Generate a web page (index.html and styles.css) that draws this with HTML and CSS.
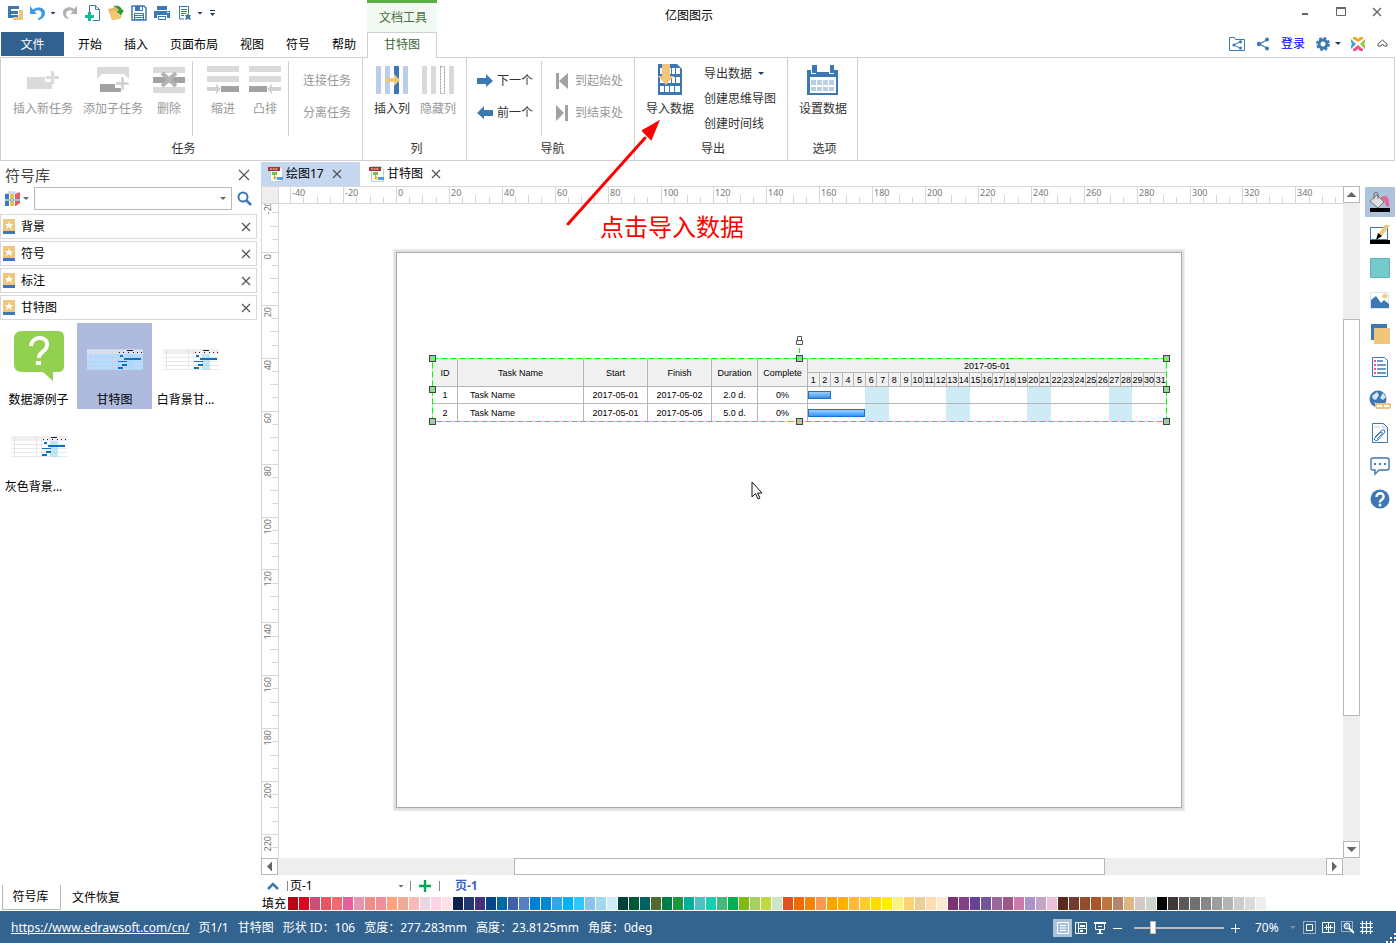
FILE: index.html
```html
<!DOCTYPE html>
<html lang="zh-CN">
<head>
<meta charset="utf-8">
<title>亿图图示</title>
<link rel="stylesheet" href="styles.css">
</head>
<body>
<div class="app">
  <header class="titlebar">
    <div class="title-left">
      <div class="quick">
        <button aria-label="亿图"><svg width="16" height="16"><path d="M1 1h11v3H4v2h7v3H4v1h7v3H1z" fill="#3c78b4"/><path d="M12 5h4v10H6v-3h6V9h1V8h-1z" fill="#efc67b"/></svg></button>
        <button aria-label="撤销"><svg width="16" height="16"><path d="M0 1v8h7L4.500 6.500C8 4 12 6 11.500 9c0 2-1.500 3.500-3.500 4.500v1.500c4-.5 7-3 7-7 0-5-6.500-7.500-12-3.500z" fill="#3e9be0"/></svg></button>
        <i class="caret"></i>
        <button aria-label="重做"><svg width="16" height="16"><path d="M15 1v8H8l3-2.500C8 4 4 6 4 9c0 2 1 3 2.500 4v1C3 13.500 1 11 1 8c0-5 6.500-7.500 11-4z" fill="#b0b0b0"/></svg></button>
        <button aria-label="新建"><svg width="16" height="16"><path d="M4.500 8V.500h6l4 4v11h-7M10.500.500v4h4" fill="none" stroke="#3c78b4"/><path d="M3 7h3v3h3v3H6v3H3v-3H0v-3h3z" fill="#12b89c"/></svg></button>
        <button aria-label="打开"><svg width="16" height="16"><path d="M0 4l5-1 2-2 3 2 5 2-2 8-9 2z" fill="#e6b85f"/><path d="M2 6l12-1-2 9-8 1z" fill="#f2c877"/><path d="M5 1c5-1 8 0 9 4h2l-3 5-5-4h3c-1-3-3-4-6-5z" fill="#249a3d"/></svg></button>
        <button aria-label="保存"><svg width="16" height="16"><path d="M1 1h12l2 2v12H1z" fill="none" stroke="#3c78b4" stroke-width="1.500"/><path d="M4 1h8v5H4zM3 8h10v7H3z" fill="#3c78b4"/><path d="M9 2h2v3H9zM4 9h8v1H4zM4 11h8v1H4zM4 13h8v1H4z" fill="#fff"/></svg></button>
        <button aria-label="打印"><svg width="16" height="16"><path d="M3 1h10v4H3zM0 6h16v7h-3v-3H3v3H0zM4 11h8v4H4z" fill="#3c78b4"/><path d="M13 7h2v1h-2zM5 12h6v2H5z" fill="#fff"/></svg></button>
        <button aria-label="预览"><svg width="16" height="16"><path d="M2.500 1.500h9v7M2.500 1v13H7" fill="none" stroke="#3c78b4"/><path d="M4 4h6v1H4zM4 6h6v1H4zM4 8h5v1H4zM4 10h3v1H4zM11 8l1 2h2l-1 2 1 3-3-1-3 1 1-3-1-2h2z" fill="#3c78b4"/></svg></button>
        <i class="caret"></i>
        <button class="more" aria-label="自定义"><svg width="7" height="10"><path d="M1 2h5v1H1zM1 5h5L3.500 8z" fill="#223a5c"/></svg></button>
      </div>
      <div class="context-title">文档工具</div>
    </div>
    <h1>亿图图示</h1>
    <div class="window-controls">
      <button aria-label="最小化"><svg width="10" height="10"><path d="M2 6h6v2H2z" fill="#666"/></svg></button>
      <button aria-label="最大化"><svg width="10" height="10"><path d="M.500.500h9v8h-9z" fill="none" stroke="#666"/><path d="M0 0h10v2H0z" fill="#666"/></svg></button>
      <button aria-label="关闭"><svg width="10" height="10"><path d="M1 1l8 8M9 1L1 9" stroke="#666" stroke-width="1.400"/></svg></button>
    </div>
  </header>

  <nav class="tabs">
    <button class="file">文件</button>
    <button>开始</button><button>插入</button><button>页面布局</button><button>视图</button><button>符号</button><button>帮助</button>
    <button class="current">甘特图</button>
    <div class="account">
      <button aria-label="共享文件夹"><svg width="16" height="16"><path d="M.500 14.500v-13h5l1 2h9v11z" fill="none" stroke="#3c78b4"/><path d="M12 5.500L4.500 9l7.500 3.500" fill="none" stroke="#3c78b4"/><circle cx="5" cy="9" r="1.600" fill="#3c78b4"/><circle cx="11.500" cy="5.800" r="1.600" fill="#3c78b4"/><circle cx="11.500" cy="12" r="1.600" fill="#3c78b4"/></svg></button>
      <button aria-label="分享"><svg width="14" height="14"><path d="M11 3L3 7l8 4" fill="none" stroke="#3c78b4" stroke-width="1.200"/><circle cx="3" cy="7" r="2.200" fill="#3c78b4"/><circle cx="11" cy="2.500" r="2" fill="#3c78b4"/><circle cx="11" cy="11.500" r="2" fill="#3c78b4"/></svg></button>
      <a href="#login">登录</a>
      <button class="gear" aria-label="设置"><svg width="14" height="14"><circle cx="7" cy="7" r="4" fill="none" stroke="#3c78b4" stroke-width="3"/><circle cx="7" cy="7" r="6" fill="none" stroke="#3c78b4" stroke-width="2" stroke-dasharray="2.700 2"/></svg><i class="caret"></i></button>
      <button aria-label="社区"><svg width="16" height="16"><path d="M3 1h3l2 2 2-2h3v2L8 6 3 3z" fill="#f7a51c"/><path d="M1 3l5 5-5 5v-3l1-2-1-2z" fill="#39a5dc"/><path d="M15 3l-5 5 5 5v-3l-1-2 1-2z" fill="#8cc63f"/><path d="M3 15h3l2-2 2 2h3v-2l-5-4-5 4z" fill="#f2587e"/></svg></button>
      <button class="fold" aria-label="折叠功能区"><svg width="11" height="9"><path d="M1 5l4.500-4L10 5v2H7L5.500 5 4 7H1z" fill="none" stroke="#555"/></svg></button>
    </div>
  </nav>

  <section class="ribbon">
    <div class="group">
      <div class="tools tools-task">
        <button class="big wide off"><svg width="32" height="32"><path d="M0 13h18v5h7v7H0z" fill="#dadada"/><path d="M24 7h3v5h5v3h-5v5h-3v-5h-5v-3h5z" fill="#dadada"/></svg>插入新任务</button>
        <button class="big wide off"><svg width="32" height="32"><path d="M0 3h32v12l-5-5H5l-5 5z" fill="#dadada"/><path d="M3 20h15v4h6v4H3z" fill="#a2a2a2"/><path d="M24 13h3v5h5v3h-5v5h-3v-5h-5v-3h5z" fill="#cfcfcf" stroke="#fff" stroke-width=".5"/></svg>添加子任务</button>
        <button class="big off"><svg width="32" height="32"><path d="M0 3h32v6H0zM0 23h32v6H0z" fill="#dadada"/><path d="M0 13h32v6H0z" fill="#a2a2a2"/><path d="M9 9l14 13M23 9L9 22" stroke="#b4b4b4" stroke-width="4"/></svg>删除</button>
        <i class="rule"></i>
        <button class="big off"><svg width="32" height="32"><path d="M0 2h32v6H0zM0 12h32v6H0z" fill="#dadada"/><path d="M0 23h9v-3l5 5-5 5v-3H0z" fill="#d2d2d2"/><path d="M14 22h18v6H14z" fill="#a2a2a2"/></svg>缩进</button>
        <button class="big off"><svg width="32" height="32"><path d="M0 2h32v6H0zM0 12h32v6H0z" fill="#dadada"/><path d="M32 23h-9v-3l-5 5 5 5v-3h9z" fill="#d2d2d2"/><path d="M0 22h18v6H0z" fill="#a2a2a2"/></svg>凸排</button>
        <i class="rule"></i>
        <div class="pair"><button class="off">连接任务</button><button class="off">分离任务</button></div>
      </div>
      <div class="label">任务</div>
    </div>
    <div class="group">
      <div class="tools tools-column">
        <button class="big mid"><svg width="32" height="32"><path d="M0 2h5v28H0zM9 2h5v28H9zM27 2h5v28h-5z" fill="#bacfe7"/><path d="M18 2h5v28h-5z" fill="#3c78b4"/><path d="M9 14h9v-4l6 6-6 6v-4H9z" fill="#efc67b"/></svg>插入列</button>
        <button class="big mid off"><svg width="32" height="32"><path d="M0 2h5v28H0zM9 2h5v28H9zM27 2h5v28h-5z" fill="#dadada"/><path d="M18.500 2.500h4v27h-4z" fill="none" stroke="#999" stroke-dasharray="2 1"/></svg>隐藏列</button>
      </div>
      <div class="label">列</div>
    </div>
    <div class="group">
      <div class="tools tools-nav">
        <div class="pair"><button><svg width="16" height="16"><path d="M0 5h9V1l7 7-7 6v-3H0z" fill="#3c78b4"/></svg>下一个</button><button><svg width="16" height="16"><path d="M16 5H7V1L0 8l7 6v-3h9z" fill="#3c78b4"/></svg>前一个</button></div>
        <i class="rule"></i>
        <div class="pair"><button class="off"><svg width="16" height="16"><path d="M1 0h3v16H1zM13 0v16L4 8z" fill="#a2a2a2"/></svg>到起始处</button><button class="off"><svg width="16" height="16"><path d="M10 0h3v16h-3zM1 0v16l8-8z" fill="#a2a2a2"/></svg>到结束处</button></div>
      </div>
      <div class="label">导航</div>
    </div>
    <div class="group">
      <div class="tools tools-export">
        <button class="big import"><svg width="32" height="32"><path d="M4 0h19l5 5v26H4z" fill="#3c78b4"/><path d="M6 4h5v6H6zM12 4h5v6h-5zM18 4h3v6h-3zM22 4h4v6h-4zM6 13h5v6H6zM12 13h5v6h-5zM18 13h3v6h-3zM22 13h4v6h-4zM6 22h4v6H6zM11 22h4v6h-4zM16 22h4v6h-4zM21 22h5v6h-5z" fill="#fff"/><path d="M8 0h8v12h4l-8 9-8-9h4z" fill="#efc67b"/></svg>导入数据</button>
        <div class="list"><button>导出数据<i class="caret"></i></button><button>创建思维导图</button><button>创建时间线</button></div>
      </div>
      <div class="label">导出</div>
    </div>
    <div class="group">
      <div class="tools tools-option">
        <button class="big import"><svg width="32" height="32"><path d="M5 1h5v7h12V1h5v5h4v25H0V6h5z" fill="#3c78b4"/><path d="M3 13h26v16H3z" fill="#fff"/><path d="M4 1h1v8h4v1H4zM22 1h1v8h4v1h-5z" fill="#fff"/><path d="M4 16h5v5H4zM10 16h5v5h-5zM16 16h5v5h-5zM22 16h5v5h-5zM4 23h5v4H4zM10 23h5v4h-5zM16 23h5v4h-5zM22 23h5v4h-5z" fill="#bacfe7"/></svg>设置数据</button>
      </div>
      <div class="label">选项</div>
    </div>
  </section>

  <main class="workspace">
    <aside class="library">
      <div class="library-head"><h2>符号库</h2><button aria-label="关闭"><svg width="12" height="12"><path d="M1 1l10 10M11 1L1 11" stroke="#555" stroke-width="1.200"/></svg></button></div>
      <div class="search">
        <button class="books" aria-label="符号库列表"><svg width="15" height="15"><path d="M0 3h4v12H0z" fill="#3c78b4"/><path d="M5 3h4v12H5z" fill="#efb75c"/><path d="M10 3l5-2v11l-4 3h-1z" fill="#e85a68"/><path d="M0 3l4-3 11 1-5 2z" fill="#d5dade"/><path d="M0 8h15v2H0z" fill="#96c9dd"/></svg><i class="caret"></i></button>
        <div class="combo"><input type="text" aria-label="搜索符号"><button aria-label="展开"><i class="caret"></i></button></div>
        <button aria-label="搜索"><svg width="15" height="15"><circle cx="6" cy="6" r="4.500" fill="none" stroke="#3c78b4" stroke-width="2"/><path d="M9 9l5 5" stroke="#3c78b4" stroke-width="2.500"/></svg></button>
      </div>
      <ul class="categories" id="categories"></ul>
      <div class="shapes">
        <button><svg width="60" height="56"><path d="M13 5h36q6 0 6 6v29q0 6-6 6h-5v9l-10-9H13q-8 0-8-8V13q0-8 8-8z" fill="#92d050"/><path d="M22 20c1-11 17-10 16-1 0 7-9 7-8 13" fill="none" stroke="#fff" stroke-width="4"/><path d="M27 35h5v4h-5z" fill="#fff"/></svg>数据源例子</button>
        <button class="chosen"><svg class="thumb" width="60" height="56"><use href="#mini-gantt"/></svg>甘特图</button>
        <button><svg class="thumb" width="60" height="56"><use href="#mini-gantt"/></svg><span class="elided">白背景甘...</span></button>
        <button><svg class="thumb" width="60" height="56"><use href="#mini-gantt"/></svg><span class="elided">灰色背景...</span></button>
      </div>
      <div class="library-tabs"><button class="active">符号库</button><button>文件恢复</button></div>
    </aside>

    <section class="editor">
      <div class="docs">
        <button class="doc active"><svg width="16" height="16"><use href="#doc-icon"/></svg>绘图17<svg class="x" width="10" height="10"><path d="M1 1l8 8M9 1L1 9" stroke="#555" stroke-width="1.300"/></svg></button>
        <button class="doc"><svg width="16" height="16"><use href="#doc-icon"/></svg>甘特图<svg class="x" width="10" height="10"><path d="M1 1l8 8M9 1L1 9" stroke="#555" stroke-width="1.300"/></svg></button>
      </div>
      <div class="viewport">
        <div class="corner"></div>
        <svg class="ruler-x" id="ruler-x"></svg>
        <div class="scroll-y"><button aria-label="向上"><i class="tri up"></i></button><div class="track"><i></i></div><button aria-label="向下"><i class="tri down"></i></button></div>
        <svg class="ruler-y" id="ruler-y"></svg>
        <div class="canvas">
          <div class="sheet">
            <div class="gantt">
              <table>
                <colgroup id="columns"><col class="c-id"><col class="c-task"><col class="c-date"><col class="c-date"><col class="c-duration"><col class="c-complete"></colgroup>
                <thead>
                  <tr><th rowspan="2">ID</th><th rowspan="2">Task Name</th><th rowspan="2">Start</th><th rowspan="2">Finish</th><th rowspan="2">Duration</th><th rowspan="2">Complete</th><th colspan="31">2017-05-01</th></tr>
                  <tr id="days"></tr>
                </thead>
                <tbody id="tasks"></tbody>
              </table>
              <svg class="selection" width="744" height="90">
                <path d="M5.500 22.500h734v63h-734zM372.500 13v4" fill="none" stroke="#e0e0e0"/>
                <path d="M5.500 22.500h734v63h-734z" fill="none" stroke="#0f0" stroke-dasharray="6 3"/>
                <path d="M372.500 12v5" stroke="#0f0"/>
                <g id="handles" fill="#8fdc8f" stroke="#444"></g>
                <path d="M370.500 4V.500h4V4" fill="none" stroke="#555"/><path d="M369.500 4.500h6v4h-6z" fill="#eee" stroke="#555"/>
              </svg>
            </div>
          </div>
          <p class="note">点击导入数据</p>
          <svg class="pointer" width="12" height="20"><path d="M1 1v15l3.500-3.500L7 18l2-1-2.500-5H11z" fill="#fff" stroke="#111"/></svg>
        </div>
        <div class="scroll-x"><button aria-label="向左"><i class="tri left"></i></button><div class="track"><i></i></div><button aria-label="向右"><i class="tri right"></i></button></div>
      </div>
      <div class="pages">
        <button class="expand" aria-label="展开页面"><svg width="12" height="10"><path d="M1 8l5-5 5 5" fill="none" stroke="#3c78b4" stroke-width="2.500"/></svg></button>
        <i class="bar"></i>
        <div class="page-select"><select aria-label="当前页"><option>页-1</option></select><i class="caret"></i></div>
        <i class="bar"></i>
        <button class="add" aria-label="添加页面"><svg width="12" height="12"><path d="M6 0v12M0 6h12" stroke="#00a651" stroke-width="2.400"/></svg></button>
        <i class="bar"></i>
        <button class="page-tab">页-1</button>
      </div>
      <div class="fill"><span>填充</span><div class="palette" id="palette"></div></div>
    </section>

    <aside class="rail">
      <button class="active" aria-label="填充"><svg width="22" height="22"><path d="M12 6c6-3 9 0 8 10l-3-1c-1-4-2-6-5-6z" fill="#e0699a"/><path d="M1 10l7-6 7 7-6 6z" fill="#dedede" stroke="#777"/><path d="M5 8V3q2-4 4 0v5" fill="none" stroke="#666"/><path d="M1 17h20v4H1z"/></svg></button>
      <button aria-label="线条"><svg width="22" height="22"><path d="M1.500 3.500h17v12h-17z" fill="none" stroke="#3c78b4"/><path d="M16 1h5l-8 11-4 1 1-4z" fill="#efc67b"/><path d="M9 9l4 3-6 4zM1 16h20v4H1z"/></svg></button>
      <button aria-label="主题颜色"><svg width="22" height="22"><path d="M1.500 1.500h19v19h-19z" fill="#75cbca" stroke="#5fb5b3"/></svg></button>
      <button aria-label="图片"><svg width="22" height="22"><path d="M1.500 2.500h18v16h-18z" fill="#fff" stroke="#d4e5f4"/><path d="M2 18v-8l5-4 5 7 3-3 5 4v4z" fill="#3c78b4"/><circle cx="16" cy="6" r="2.500" fill="#f3cb7e"/></svg></button>
      <button aria-label="图层"><svg width="22" height="22"><path d="M2 1h16v16H2z" fill="#3c78b4"/><path d="M5 5h16v16H5z" fill="#efc67b"/></svg></button>
      <button aria-label="属性"><svg width="22" height="22"><path d="M3.500 1.500h12l3 3v16h-15z" fill="#fff" stroke="#3c78b4"/><path d="M8 5h6M8 9h9M8 13h9M8 17h9" stroke="#3c78b4" stroke-width="1.500"/><path d="M5 5h2M5 9h2M5 13h2M5 17h2" stroke="#e75a68" stroke-width="2"/></svg></button>
      <button aria-label="超链接"><svg width="22" height="22"><circle cx="9" cy="10" r="8.500" fill="#3c78b4"/><path d="M3 7l5-4 2 3-3 5-3-1zM11 9l3-5 3 4-3 3zM5 13l4 2-1 3z" fill="#d7e7f2"/><g fill="#fff" stroke="#efc67b" stroke-width="2"><rect x="7" y="15" width="7" height="4" rx="1"/><rect x="14" y="15" width="7" height="4" rx="1"/></g></svg></button>
      <button aria-label="附件"><svg width="22" height="22"><path d="M3.500 1.500h11l4 4v15h-15z" fill="#fff" stroke="#3c78b4"/><path d="M14 2v4h4M5 5h6" fill="none" stroke="#b8c6d4"/><path d="M6 15l7-7q3-1 3 2l-7 8q-3 2-4-1l7-7q2 0 1 2l-5 5" fill="none" stroke="#3c78b4"/></svg></button>
      <button aria-label="批注"><svg width="22" height="22"><path d="M4 3h14q2 0 2 2v8q0 2-2 2h-8l-4 4v-4H4q-2 0-2-2V5q0-2 2-2z" fill="#fff" stroke="#3c78b4" stroke-width="1.400"/><path d="M5 8h2v2H5zM10 8h2v2h-2zM15 8h2v2h-2z" fill="#3c78b4"/></svg></button>
      <button aria-label="帮助"><svg width="22" height="22"><circle cx="11" cy="11" r="9.500" fill="#3c78b4"/><path d="M7.500 9c0-5 7.500-5 7 0 0 3-4 2.500-3.500 5.500" fill="none" stroke="#fff" stroke-width="2.500"/><circle cx="11" cy="17" r="1.500" fill="#fff"/></svg></button>
    </aside>
  </main>

  <footer class="status">
    <a href="https://www.edrawsoft.com/cn/">https://www.edrawsoft.com/cn/</a>
    <span>页1/1</span><span>甘特图</span><span>形状 ID：106</span><span>宽度：277.283mm</span><span>高度：23.8125mm</span><span>角度：0deg</span>
    <div class="view-tools">
      <button class="active" aria-label="页面视图"><svg width="12" height="12"><path d="M.500.500h11v11H.500zM3 3.500h6M3 6h6M3 8.500h6" fill="none" stroke="#fff"/></svg></button>
      <button aria-label="大纲视图"><svg width="12" height="12"><path d="M.500.500h11v11H.500zM3.500 0v12M3 6.500h8" fill="none" stroke="#fff"/><path d="M5 3h5v2H5zM5 8h3v2H5z" fill="#fff"/></svg></button>
      <button aria-label="演示"><svg width="12" height="12"><path d="M0 0h12v2H0zM5 8h2v3h2v1H3v-1h2z" fill="#fff"/><path d="M1.500 1v6.500h9V1M4 4.500h4" fill="none" stroke="#fff"/></svg></button>
      <button class="minus" aria-label="缩小"><svg width="9" height="12"><path d="M0 6.500h9" stroke="#fff"/></svg></button>
      <input type="range" min="10" max="400" value="85" aria-label="缩放">
      <button aria-label="放大"><svg width="9" height="12"><path d="M0 6.500h9M4.500 2v9" stroke="#fff"/></svg></button>
      <span class="zoom-value">70%</span><i class="caret"></i>
      <button class="fit" aria-label="适合页面"><svg width="13" height="13"><path d="M.500.500h12v12H.500z" fill="none" stroke="#fff" stroke-dasharray="1 1"/><path d="M3.500 3.500h6v6h-6z" fill="none" stroke="#fff"/></svg></button>
      <button class="fit" aria-label="适合宽度"><svg width="13" height="13"><path d="M.500 1.500h12v10H.500zM2 6.500h9M4.500 4v5M8.500 4v5M6.500 2v9" fill="none" stroke="#fff"/></svg></button>
      <button class="fit" aria-label="缩放选区"><svg width="13" height="13"><path d="M.500.500h11v10H.500z" fill="none" stroke="#fff" stroke-dasharray="1 1"/><circle cx="6" cy="5" r="3" fill="#7c9ebd" stroke="#fff"/><path d="M8 7l5 5" stroke="#fff" stroke-width="2"/></svg></button>
      <button class="fit" aria-label="网格"><svg width="13" height="13"><path d="M2.500 0v13M6.500 0v13M10.500 0v13M0 2.500h13M0 6.500h13M0 10.500h13" stroke="#fff" stroke-width="1.200"/></svg></button>
    </div>
    <svg class="grip" width="10" height="10"><path d="M8 0h2v2H8zM4 4h2v2H4zM8 4h2v2H8zM0 8h2v2H0zM4 8h2v2H4zM8 8h2v2H8z" fill="#fff"/></svg>
  </footer>

  <svg class="arrow" width="96" height="108"><path d="M3 104L80 18" stroke="#f00" stroke-width="3" stroke-linecap="round"/><path d="M93 2L77 10l9 9z" fill="#f00"/><path d="M93 2L78 11l8 8z" stroke="#f00" stroke-width="2" fill="#f00"/></svg>
</div>

<svg class="defs" width="0" height="0" aria-hidden="true">
  <symbol id="mini-gantt" viewBox="0 0 60 56">
    <path d="M2 24h56v20H2z" class="paper"/><path d="M2 23h56v5H2z" fill="#e6e6e6" opacity=".6"/>
    <path d="M2 31.500h56M2 35.500h56M2 39.500h56M2 43.500h56M5.500 24v20M27.500 24v20M32.500 24v20" stroke="#c8c8d0" opacity=".4"/>
    <path d="M41 28h8v16h-8z" fill="#a9dcf2" opacity=".7"/>
    <path d="M42 24h6v1h-6zM34 26h1v1h-1zM38 26h1v1h-1zM43 26h1v1h-1zM48 26h1v1h-1zM52 26h1v1h-1zM56 26h1v1h-1z" fill="#313"/>
    <path d="M35 29h3v2h-3zM39 32h17v2H39zM33 35h9v1h-9zM37 38h5v2h-5zM33 41h5v2h-5z" fill="#0b73c0"/>
  </symbol>
  <symbol id="doc-icon" viewBox="0 0 16 16">
    <path d="M2.500.500h9l3 3v12h-12z" fill="#fff" stroke="#bcd0d2"/><path d="M0 1h12v4H0z" fill="#a83236"/><path d="M2 3h8" stroke="#f5d9da" stroke-dasharray="2 .6"/>
    <path d="M4 6h5v3H7v2H6V9H4z" fill="#7cbd4c"/><path d="M5 12l2-2 2 2-2 2z" fill="#f6ab24"/><path d="M9 11h6v3H9z" fill="#4b9fea"/>
  </symbol>
</svg>
<script src="app.js"></script>
</body>
</html>
```

FILE: styles.css
```css
* { box-sizing: border-box; }
body { margin: 0; background: #fff; color: #000; font: 12px/16px "Noto Sans", "Noto Sans CJK SC", sans-serif; }
button, input, select { font: inherit; color: inherit; margin: 0; padding: 0; border: 0; background: none; }
button { display: flex; align-items: center; justify-content: center; white-space: nowrap; }
svg { display: block; flex: none; }
h1, h2, p, ul { margin: 0; padding: 0; font-weight: 400; }
.defs { position: absolute; }
.app { position: relative; display: flex; flex-direction: column; min-height: 100vh; }
.caret { display: block; flex: none; width: 6px; height: 3px; background: #666; clip-path: polygon(0 0, 100% 0, 50% 100%); }

.titlebar { display: grid; grid-template-columns: 1fr auto 1fr; height: 32px; padding-right: 18px; }
.titlebar h1 { align-self: center; font-size: 12px; line-height: 16px; }
.title-left { display: flex; }
.quick { display: flex; align-items: center; width: 367px; padding: 0 0 6px 7px; gap: 7px; }
.quick .caret { margin: 0 -1px 0 -3px; background: #223a5c; }
.context-title { width: 70px; padding: 7px 0 0 2px; border-top: 3px solid #5fad46; background: #f2f8f2; color: #4a7040; text-align: center; }
.window-controls { display: flex; justify-content: flex-end; align-items: flex-start; gap: 26px; margin-right: -4px; padding-top: 7px; }

.tabs { display: flex; height: 25px; padding-left: 1px; }
.tabs > button { padding: 0 11px; }
.tabs .file { width: 63px; height: 24px; margin-right: 3px; padding-top: 1px; background: #31618f; color: #fff; }
.tabs .current { position: relative; z-index: 1; width: 70px; height: 26px; padding-bottom: 2px; border: 1px solid #d0d0d0; border-bottom: 0; background: #fff; color: #3d6734; }
.account { display: flex; align-items: center; gap: 11px; margin-left: auto; padding: 0 8px 2px 0; }
.account a { color: #00f; text-decoration: none; }
.account .gear { gap: 5px; margin-right: -2px; }
.account .caret { background: #223a5c; }

.ribbon { display: flex; height: 104px; margin: 0 1px 0 0; border: 1px solid #d0d0d0; color: #333; }
.group { display: flex; flex-direction: column; border-right: 1px solid #d0d0d0; }
.tools { display: flex; height: 80px; padding-top: 3px; }
.label { padding: 3px 0 0 4px; text-align: center; }
.big { flex-direction: column; justify-content: flex-start; width: 42px; padding-top: 3px; gap: 5px; }
.wide { width: 70px; }
.mid { width: 46px; }
.import { width: 60px; }
.off { color: #999; }
.rule { width: 1px; height: 75px; background: #d0d0d0; }
.tools-task { padding-left: 7px; padding-right: 11px; }
.tools-task .rule:nth-of-type(1) { margin: 0 9px 0 2px; }
.tools-task .rule:nth-of-type(2) { margin: 0 14px 0 2px; }
.tools-column { padding-left: 6px; padding-right: 5px; }
.tools-nav { padding-left: 10px; padding-right: 11px; }
.tools-nav .rule { margin: 0 13px 0 8px; }
.tools-export { padding-left: 5px; padding-right: 11px; }
.tools-option { padding-left: 5px; padding-right: 4px; }
.pair { display: flex; flex-direction: column; padding-top: 4px; }
.pair button { height: 32px; gap: 4px; }
.list { display: flex; flex-direction: column; align-items: flex-start; padding-left: 4px; }
.list button { height: 25px; gap: 6px; }
.list .caret { background: #223a5c; }

.workspace { display: flex; flex: 1; padding-top: 1px; }
.library { display: flex; flex-direction: column; width: 257px; margin-right: 4px; }
.library-head { display: flex; align-items: center; justify-content: space-between; height: 25px; padding: 0 7px 0 5px; }
.library-head h2 { font-size: 15px; line-height: 24px; color: #444; }
.search { display: flex; height: 23px; align-items: center; justify-content: space-between; padding: 0 5px; margin-bottom: 4px; }
.books { gap: 3px; }
.combo { display: flex; width: 198px; height: 23px; border: 1px solid #b8b8b8; }
.combo input { flex: 1; min-width: 0; padding: 0 4px; outline: 0; }
.combo button { width: 16px; }
.categories { display: flex; flex-direction: column; gap: 2px; list-style: none; }
.categories li { display: flex; align-items: center; height: 25px; gap: 6px; padding: 0 5px 0 2px; border: 1px solid #d8d8d8; }
.categories button { margin-left: auto; }
.shapes { display: grid; grid-template-columns: 76px 76px 76px; grid-auto-rows: 87px; padding-top: 3px; }
.shapes button { flex-direction: column; justify-content: flex-start; gap: 10px; margin-left: 1px; height: 86px; padding-top: 3px; }
.shapes .chosen { background: #aebbde; }
.shapes .elided { padding-right: 10px; }
.chosen .thumb { --paper: #b8dcff; }
.paper { fill: var(--paper, #fff); }
.library-tabs { display: flex; height: 26px; margin-top: auto; padding: 0 0 1px 2px; }
.library-tabs button { width: 70px; }
.library-tabs .active { width: 59px; padding-right: 2px; border: 1px solid #b8b8b8; border-top: 0; }

.editor { display: flex; flex: 1; flex-direction: column; min-width: 0; }
.docs { display: flex; height: 24px; }
.doc { justify-content: flex-start; gap: 2px; padding: 0 7px; }
.doc.active { width: 99px; margin-right: 2px; background: #c6d7f0; }
.doc .x { margin-left: 6px; }
.viewport { display: grid; flex: 1; grid-template-columns: 18px 1fr 17px; grid-template-rows: 18px 1fr 17px; }
.corner { background: #eee; border: 1px solid #d8d8d8; }
.ruler-x, .ruler-y { width: 100%; height: 100%; overflow: hidden; font-size: 9px; fill: #777; shape-rendering: crispEdges; }
.ruler-x { border-top: 1px solid #d8d8d8; border-bottom: 1px solid #d8d8d8; }
.ruler-y { border-left: 1px solid #d8d8d8; border-right: 1px solid #d8d8d8; }
.scroll-y { display: flex; grid-row: 1 / 3; grid-column: 3; flex-direction: column; background: #eee; }
.scroll-x { display: flex; grid-column: 1 / 4; padding-right: 17px; background: #eee; }
.scroll-y button, .scroll-x button { width: 17px; height: 17px; border: 1px solid #b8b8b8; background: #fff; }
.track { position: relative; flex: 1; }
.track i { position: absolute; border: 1px solid #b8b8b8; background: #fff; }
.scroll-y .track i { top: 18.2%; bottom: 19.6%; width: 17px; }
.scroll-x .track i { left: 22.5%; right: 21.1%; height: 17px; }
.tri { width: 10px; height: 5px; background: #666; clip-path: polygon(50% 0, 100% 100%, 0 100%); }
.tri.down { clip-path: polygon(0 0, 100% 0, 50% 100%); }
.tri.left, .tri.right { width: 5px; height: 10px; clip-path: polygon(0 50%, 100% 0, 100% 100%); }
.tri.right { clip-path: polygon(0 0, 100% 50%, 0 100%); }
.canvas { position: relative; overflow: hidden; }
.sheet { position: absolute; left: 117px; top: 48px; width: 786px; height: 556px; border: 1px solid #aaa; background: #fff; box-shadow: 0 0 0 2px #e0e0e0, 0 0 1px 3px #eee; }
.note { position: absolute; left: 321px; top: 7px; color: #f00; font-size: 24px; line-height: 32px; }
.pointer { position: absolute; left: 472px; top: 277px; }
.gantt { position: absolute; left: 35px; top: 105px; }
.gantt table { width: 735px; border-collapse: collapse; table-layout: fixed; font: 9px/10px "Liberation Sans", Arial, sans-serif; text-align: center; }
.c-id { width: 25px; }
.c-task { width: 126px; }
.c-date { width: 64px; }
.c-duration { width: 46px; }
.c-complete { width: 50px; }
.gantt th { height: 14px; padding: 0; border: 1px solid #b6b6b6; background: #f1f1f1; font-weight: 400; }
.gantt td { height: 17px; padding: 0; border: 1px solid #b6b6b6; }
.gantt tr:last-child td { height: 18px; }
.gantt .task { padding-left: 12px; text-align: left; }
.gantt .day { border-left: 0; border-right: 0; }
.gantt .weekend { background: #cfebf6; }
.progress { display: block; height: 8px; border: 1px solid #1474c8; background: linear-gradient(#9fd0ff, #3d92ea); }
.selection { position: absolute; left: -5px; top: -22px; }
.pages { display: flex; align-items: center; height: 22px; padding-left: 6px; }
.expand { margin-right: 8px; }
.bar { width: 1px; height: 10px; background: #888; }
.page-select { display: flex; align-items: center; width: 122px; padding: 0 6px 0 2px; }
.page-select select { flex: 1; appearance: none; outline: 0; }
.add { margin: 0 8px; }
.page-tab { margin-left: 15px; color: #3a62c4; font-weight: 700; }
.fill { display: flex; height: 14px; }
.fill span { width: 27px; white-space: nowrap; line-height: 14px; padding-left: 1px; }
.palette { display: flex; gap: 1px; }
.palette button { width: 10px; height: 13px; }

.rail { display: flex; flex-direction: column; gap: 3px; width: 30px; margin: 25px 1px 0 5px; }
.rail button { height: 30px; }
.rail .active { background: #adc3dc; }

.status { display: flex; align-items: center; height: 32px; padding: 1px 0 0 11px; gap: 9px; background: #33638f; color: #fff; white-space: nowrap; position: relative; }
.status a { color: #fff; }
.view-tools { display: flex; align-items: center; gap: 7px; margin-left: auto; padding-right: 23px; }
.view-tools .active { width: 19px; height: 18px; margin-right: -4px; background: #a9c1da; }
.view-tools .minus { margin-right: 5px; }
.view-tools input { appearance: none; width: 90px; height: 2px; background: #bbb; }
.view-tools input::-webkit-slider-thumb { appearance: none; width: 6px; height: 13px; border: 1px solid #bbb; background: #fff; }
.zoom-value { width: 28px; margin-left: 8px; }
.view-tools .caret { background: #8b8b8b; }
.view-tools .fit + .fit { margin-left: -1px; }
.grip { position: absolute; right: 0; bottom: 0; }
.arrow { position: absolute; left: 565px; top: 120px; pointer-events: none; }
```

FILE: app.js
```js
const $ = id => document.getElementById(id);

const closeIcon = '<svg width="10" height="10"><path d="M1 1l8 8M9 1L1 9" stroke="#555" stroke-width="1.300"/></svg>';
const starIcon = '<svg width="12" height="15"><path d="M0 0h12v12H0z" fill="#efc67b"/><path d="M0 12h12v3H0z" fill="#3c78b4"/><path d="M6 2l1 3h3L8 7l1 3-3-2-3 2 1-3-2-2h3z" fill="#fff"/></svg>';
$('categories').innerHTML = ['背景', '符号', '标注', '甘特图']
  .map(name => `<li>${starIcon}${name}<button aria-label="关闭${name}">${closeIcon}</button></li>`).join('');

// Rulers: a labelled tick every 20 mm, with three short ticks in between.
const step = 52.9;
function ruler(vertical, origin, from, to) {
  let out = '';
  for (let n = from; n <= to; n++) {
    const p = Math.round(origin + n * step / 4);
    const major = n % 4 === 0;
    const start = major ? 0 : n % 2 ? 10 : 8;
    out += vertical
      ? `<path d="M${start} ${p}h${18 - start}v1h-${18 - start}z" fill="#d8d8d8"/>`
      : `<path d="M${p} ${start}v${18 - start}h1v-${18 - start}z" fill="#d8d8d8"/>`;
    if (major) out += vertical
      ? `<text text-anchor="end" transform="translate(9 ${p + 2}) rotate(-90)">${n * 5}</text>`
      : `<text x="${p + 2}" y="9">${n * 5}</text>`;
  }
  return out;
}
$('ruler-x').innerHTML = ruler(false, 117, -8, 71);
$('ruler-y').innerHTML = ruler(true, 48, -4, 45);

const days = Array.from({ length: 31 }, (_, i) => i + 1);
$('columns').insertAdjacentHTML('beforeend', '<col>'.repeat(31));
$('days').innerHTML = days.map(d => `<th>${d}</th>`).join('');
$('tasks').innerHTML = [
  [1, '2017-05-02', 2],
  [2, '2017-05-05', 5]
].map(([id, finish, length]) => `<tr><td>${id}</td><td class="task">Task Name</td><td>2017-05-01</td><td>${finish}</td><td>${length}.0 d.</td><td>0%</td>` +
  `<td class="day" colspan="${length}"><i class="progress"></i></td>` +
  days.slice(length).map(d => `<td class="day${d % 7 === 6 || d % 7 === 0 ? ' weekend' : ''}"></td>`).join('') + '</tr>').join('');

$('handles').innerHTML = [[5, 22], [372, 22], [739, 22], [5, 53], [739, 53], [5, 85], [372, 85], [739, 85]]
  .map(([x, y]) => `<rect x="${x - 2.5}" y="${y - 2.5}" width="6" height="6"/>`).join('');

$('palette').innerHTML = ('b50815 d9071f c94e78 ea5462 ee6b72 e85f9f e397b5 ee8c85 f08f9b ffa17a f0ab94 f8bcb8 ebd6e8 ffd3e6 fee0e6 ' +
  '0e2050 213872 432f7b 07468b 0069a6 3f5fad 5580c3 0080d0 008bd0 32a8e2 00b4f1 32c7fa 8dc0eb a1d8ef cfebf6 ' +
  '00423a 005a34 00635f 536a2e 007c49 1f963f 00b09e 52bfc1 1acdb2 44b97b 00b053 80ba12 a5cf62 bfd942 cce5ca ' +
  'e25022 ef6a00 f18500 f49a56 f3a700 ffb100 ffb838 facb32 ffdb00 ffee00 fcf283 ffd470 ebce98 ffddae fde8d0 ' +
  '7a3271 824088 674198 735599 98689e 9f578a cc7ab0 ab93cf c6a4c8 ecc2db ' +
  '5a2a1c 753b31 944d2a ab5427 c0773f b5866c dfb783 d4cac5 cbd5cc ' +
  '000000 3f3838 5a5858 707070 878787 9d9f9f b2b5b5 cbcdcd dadada eeeeee').split(' ')
  .map(c => `<button aria-label="#${c}" style="background:#${c}"></button>`).join('');
```
